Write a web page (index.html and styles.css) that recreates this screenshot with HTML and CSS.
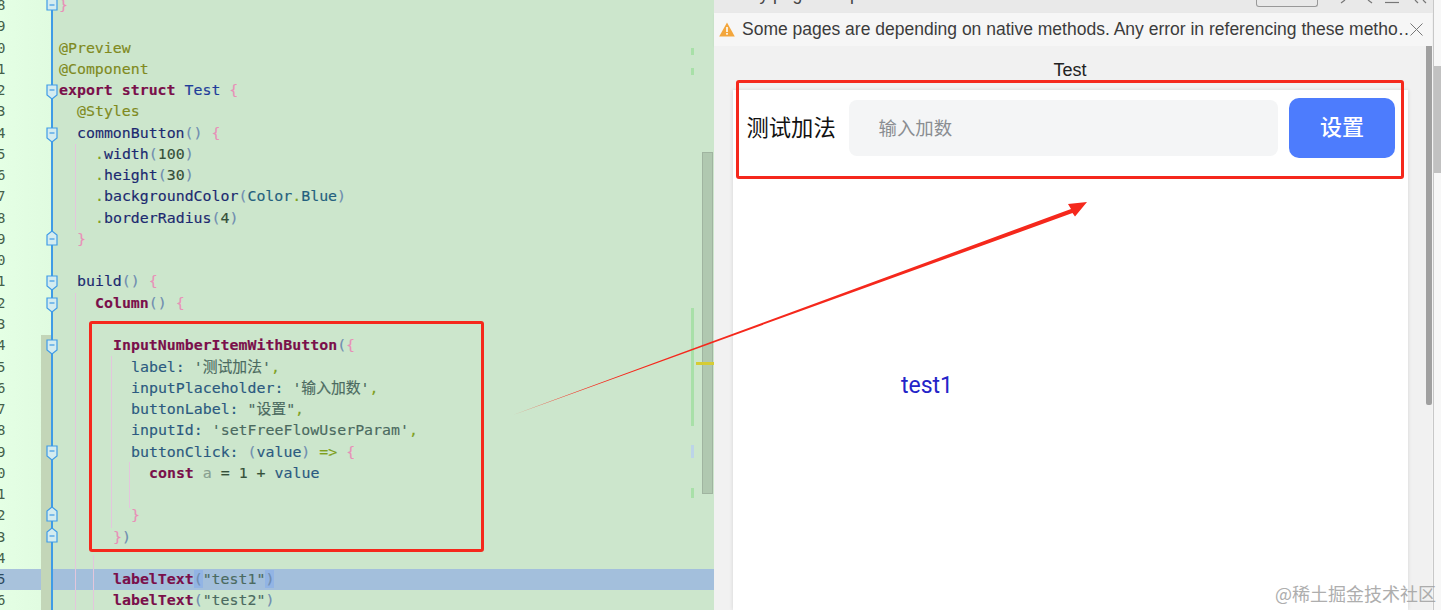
FILE: index.html
```html
<!DOCTYPE html>
<html lang="zh">
<head>
<meta charset="utf-8">
<title>Test</title>
<link rel="stylesheet" href="styles.css">
</head>
<body>
<div class="screen">
  <section class="editor">
    <div class="gutter">
      <div class="ln">8</div><div class="ln">9</div><div class="ln">0</div><div class="ln">1</div><div class="ln">2</div><div class="ln">3</div><div class="ln">4</div><div class="ln">5</div><div class="ln">6</div><div class="ln">7</div><div class="ln">8</div><div class="ln">9</div><div class="ln">0</div><div class="ln">1</div><div class="ln">2</div><div class="ln">3</div><div class="ln">4</div><div class="ln">5</div><div class="ln">6</div><div class="ln">7</div><div class="ln">8</div><div class="ln">9</div><div class="ln">0</div><div class="ln">1</div><div class="ln">2</div><div class="ln">3</div><div class="ln">4</div><div class="ln ln-sel">5</div><div class="ln">6</div>
    </div>
    <div class="code">
      <div class="l"><span class="br">}</span></div>
      <div class="l"></div>
      <div class="l"><span class="ann">@Preview</span></div>
      <div class="l"><span class="ann">@Component</span></div>
      <div class="l"><b class="kw">export struct</b> <span class="ty">Test</span> <span class="br">{</span></div>
      <div class="l i1"><span class="ann">@Styles</span></div>
      <div class="l i1"><span class="fn">commonButton</span><span class="pa">()</span> <span class="br">{</span></div>
      <div class="l i2"><span class="dot">.</span><span class="fn">width</span><span class="pa">(</span><span class="num">100</span><span class="pa">)</span></div>
      <div class="l i2"><span class="dot">.</span><span class="fn">height</span><span class="pa">(</span><span class="num">30</span><span class="pa">)</span></div>
      <div class="l i2"><span class="dot">.</span><span class="fn">backgroundColor</span><span class="pa">(</span><span class="ty2">Color</span><span class="dot">.</span><span class="ty2">Blue</span><span class="pa">)</span></div>
      <div class="l i2"><span class="dot">.</span><span class="fn">borderRadius</span><span class="pa">(</span><span class="num">4</span><span class="pa">)</span></div>
      <div class="l i1"><span class="br">}</span></div>
      <div class="l"></div>
      <div class="l i1"><span class="fn">build</span><span class="pa">()</span> <span class="br">{</span></div>
      <div class="l i2"><b class="kw">Column</b><span class="pa">()</span> <span class="br">{</span></div>
      <div class="l"></div>
      <div class="l i3"><b class="kw">InputNumberItemWithButton</b><span class="pa">(</span><span class="br">{</span></div>
      <div class="l i4"><span class="prop">label:</span> <span class="str">'<span class="cjk">测试加法</span>'</span><span class="dot">,</span></div>
      <div class="l i4"><span class="prop">inputPlaceholder:</span> <span class="str">'<span class="cjk">输入加数</span>'</span><span class="dot">,</span></div>
      <div class="l i4"><span class="prop">buttonLabel:</span> <span class="str">"<span class="cjk">设置</span>"</span><span class="dot">,</span></div>
      <div class="l i4"><span class="prop">inputId:</span> <span class="str">'setFreeFlowUserParam'</span><span class="dot">,</span></div>
      <div class="l i4"><span class="prop">buttonClick:</span> <span class="pa">(</span><span class="prop">value</span><span class="pa">)</span> <span class="dot">=&gt;</span> <span class="br">{</span></div>
      <div class="l i5"><b class="kw">const</b> <span class="unused">a</span> <span class="num">= 1 +</span> <span class="prop">value</span></div>
      <div class="l"></div>
      <div class="l i4"><span class="br">}</span></div>
      <div class="l i3"><span class="br">}</span><span class="pa">)</span></div>
      <div class="l"></div>
      <div class="l i3 sel"><b class="kw">labelText</b><span class="pa match">(</span><span class="str">"test1"</span><span class="pa match">)</span></div>
      <div class="l i3"><b class="kw">labelText</b><span class="pa">(</span><span class="str">"test2"</span><span class="pa">)</span></div>
    </div>
    <div class="guide guide-a"></div>
    <div class="guide guide-b"></div>
    <div class="guide guide-c"></div>
    <div class="guide guide-d"></div>
    <div class="guide guide-e"></div>
    <div class="change-band"></div>
    <div class="fold-line"></div>
    <svg class="folds" width="20" height="610" viewBox="0 0 20 610" aria-hidden="true">
      <g class="fold-g">
        <path d="M1 10h10v-10l-5-4l-5 4z"/><path d="M3.500 5h5"/>
        <path d="M1 85h10v10l-5 4l-5-4z"/><path d="M3.500 90h5"/>
        <path d="M1 128h10v10l-5 4l-5-4z"/><path d="M3.500 133h5"/>
        <path d="M1 276h10v10l-5 4l-5-4z"/><path d="M3.500 281h5"/>
        <path d="M1 298h10v10l-5 4l-5-4z"/><path d="M3.500 303h5"/>
        <path d="M1 340h10v10l-5 4l-5-4z"/><path d="M3.500 345h5"/>
        <path d="M1 446h10v10l-5 4l-5-4z"/><path d="M3.500 451h5"/>
        <path d="M1 245h10v-10l-5-4l-5 4z"/><path d="M3.500 239h5"/>
        <path d="M1 521h10v-10l-5-4l-5 4z"/><path d="M3.500 515h5"/>
        <path d="M1 542h10v-10l-5-4l-5 4z"/><path d="M3.500 536h5"/>
      </g>
    </svg>
    <div class="stripe stripe-a"></div>
    <div class="stripe stripe-b"></div>
    <div class="stripe stripe-c"></div>
    <div class="stripe stripe-d"></div>
    <div class="stripe stripe-e"></div>
    <div class="editor-scroll"></div>
    <div class="caret-mark"></div>
  </section>

  <section class="preview">
    <div class="topbar">
      <span class="top-title">Any page can preview</span>
      <div class="top-tools">
        <span class="top-select"></span>
        <svg width="112" height="8" viewBox="0 0 112 8" aria-hidden="true"><g class="top-icons"><path d="M23 3l4-3"/><path d="M50 0l4 3"/><path d="M67 2.500h14"/><path d="M97 0l3 3M105 0l3 3"/></g></svg>
      </div>
    </div>
    <div class="warn">
      <svg class="warn-ico" width="16" height="15" viewBox="0 0 16 15" aria-hidden="true"><path d="M8 0.500L15.800 14.500H0.200z" fill="#f3a63c"/><rect x="7.200" y="5" width="1.600" height="5" fill="#fff"/><rect x="7.200" y="11" width="1.600" height="1.700" fill="#fff"/></svg>
      <span class="warn-text">Some pages are depending on native methods. Any error in referencing these metho…</span>
      <svg class="warn-x" width="13" height="13" viewBox="0 0 13 13" aria-hidden="true"><path d="M0.500 0.500l12 12M12.500 0.500l-12 12" stroke="#777" stroke-width="1" fill="none"/></svg>
    </div>
    <div class="stage">
      <div class="device-title">Test</div>
      <div class="device">
        <div class="form-row">
          <span class="form-label">测试加法</span>
          <div class="form-input">输入加数</div>
          <div class="form-btn">设置</div>
        </div>
        <div class="test1">test1</div>
      </div>
    </div>
    <div class="stage-thumb"></div>
    <div class="sidebar"><div class="thumb"></div></div>
  </section>

  <div class="mark mark-code"></div>
  <div class="mark mark-device"></div>
  <svg class="arrow" width="1441" height="610" viewBox="0 0 1441 610" aria-hidden="true">
    <path d="M513 415L1071 209L1068 204L1087 202L1075 216.500L1072.500 213z" fill="#f5281c"/>
  </svg>
  <div class="watermark">@稀土掘金技术社区</div>
</div>
</body>
</html>
```
FILE: styles.css
```css
* { box-sizing: border-box; }
html, body { margin: 0; padding: 0; }
body { width: 1441px; height: 610px; overflow: hidden; background: #fff; font-family: "Liberation Sans", "Noto Sans CJK SC", sans-serif; }
.screen { position: relative; display: flex; width: 1441px; height: 610px; overflow: hidden; }

.editor { position: relative; display: flex; flex: 0 0 714px; height: 610px; background: #cce6cc; overflow: hidden; }
.gutter { flex: 0 0 53px; margin-top: -5px; background: linear-gradient(90deg, #e4ffe4, #e0fbe0); height: 620px; }
.ln { height: 21.27px; text-indent: -3px; font: 14px/21.27px "DejaVu Sans Mono", monospace; color: #45604a; }
.ln-sel { background: #a8c2dc; color: #2e4a60; }
.code { flex: 1; margin-top: -5px; padding-left: 6px; font: 14.9px/21.27px "DejaVu Sans Mono", "Noto Sans CJK SC", monospace; color: #1c2a70; -webkit-text-stroke: 0.15px currentColor; }
.l { height: 21.27px; white-space: pre; }
.i1 { padding-left: 18px; }
.i2 { padding-left: 36px; }
.i3 { padding-left: 54px; }
.i4 { padding-left: 72px; }
.i5 { padding-left: 90px; }
.sel { margin-left: -8px; padding-left: 62px; background: #a3bfdc; }
.cjk { font-family: "Noto Sans CJK SC", sans-serif; font-size: 14.8px; line-height: 0; }
.kw { color: #7a0f4a; font-weight: 700; }
.ann { color: #808a1e; }
.ty { color: #1f3d9a; }
.ty2 { color: #24607e; }
.fn { color: #1c2a70; }
.br { color: #e890b8; }
.pa { color: #6f8db0; }
.dot { color: #7fa01e; }
.num { color: #35503a; }
.prop { color: #2b5a80; }
.str { color: #4b6a60; }
.unused { color: #88a090; }
.match { background: #92b4e4; }

.guide { position: absolute; width: 1px; background: #e3c6dc; }
.guide-a { left: 75px; top: 144px; height: 86px; }
.guide-b { left: 75px; top: 293px; height: 317px; }
.guide-c { left: 93px; top: 555px; height: 55px; }
.guide-d { left: 111px; top: 356px; height: 172px; }
.guide-e { left: 129px; top: 462px; height: 46px; }
.change-band { position: absolute; left: 41px; top: 335px; width: 10px; height: 275px; background: #c3d6b8; }
.fold-line { position: absolute; left: 51px; top: 0; width: 1.5px; height: 610px; background: #3f9be6; }
.folds { position: absolute; left: 46px; top: 0; }
.fold-g path { fill: #d4ecf0; stroke: #3f9be6; stroke-width: 1.2; }
.stripe { position: absolute; left: 691px; width: 3px; background: #a8e0a8; }
.stripe-a { top: 48px; height: 7px; }
.stripe-b { top: 68px; height: 7px; }
.stripe-c { top: 308px; height: 118px; }
.stripe-d { top: 445px; height: 13px; background: #bcd4e8; }
.stripe-e { top: 488px; height: 10px; }
.editor-scroll { position: absolute; left: 702px; top: 152px; width: 11px; height: 342px; background: #b0c8b0; border: 1px solid #a0b4a0; }
.caret-mark { position: absolute; left: 696px; top: 362px; width: 18px; height: 3px; background: #d6cc34; }

.preview { position: relative; flex: 1; height: 610px; background: #f4f4f4; }
.topbar { display: flex; justify-content: space-between; height: 13px; background: #e9e9e9; overflow: hidden; }
.top-title { margin-top: -15px; margin-left: 24px; font-size: 17.5px; line-height: 18px; color: #444; white-space: nowrap; }
.top-tools { display: flex; align-items: flex-start; margin-right: 11px; }
.top-select { width: 62px; height: 7px; border: 1px solid #999; border-top: 0; border-radius: 0 0 3px 3px; }
.top-icons path { fill: none; stroke: #777; stroke-width: 1.2; }
.warn { display: flex; align-items: center; width: 718px; height: 33px; padding-left: 5px; background: #f6f6f6; box-shadow: 0 1px 2px rgba(0,0,0,0.06); }
.warn-ico { flex: none; margin-right: 7px; }
.warn-text { flex: none; width: 668px; font-size: 17.5px; line-height: 33px; color: #3c3c3c; white-space: nowrap; overflow: hidden; }
.warn-x { flex: none; }
.stage { width: 718px; height: 564px; padding: 0 24px 0 19px; background: #f1f1f1; }
.device-title { height: 44px; padding-top: 14px; margin-right: 1px; font-size: 18px; line-height: 20px; text-align: center; color: #222; }
.device { height: 520px; background: #fff; box-shadow: 0 0 4px rgba(0,0,0,0.12); }
.form-row { display: flex; align-items: center; height: 76px; padding: 8px 13px 8px 13.5px; }
.form-label { flex: none; width: 102.5px; margin-bottom: 5px; font: 22.3px/30px "Noto Sans CJK SC", sans-serif; color: #111; }
.form-input { flex: none; width: 429px; height: 56px; padding-left: 29.5px; border-radius: 8px; background: #f4f5f6; font: 18.4px/54px "Noto Sans CJK SC", sans-serif; color: #8a8d91; }
.form-btn { flex: none; width: 106px; height: 60px; margin-left: 11px; border-radius: 10px; background: #4d7cfd; font: 500 22px/54px "Noto Sans CJK SC", sans-serif; text-align: center; color: #fff; }
.test1 { margin-top: 205px; margin-left: 168px; font: 23px/30px Roboto, sans-serif; color: #2424c8; }
.stage-thumb { position: absolute; left: 712px; top: 46px; width: 6px; height: 359px; background: #a0a0a0; border-radius: 0 0 2px 2px; }
.sidebar { position: absolute; left: 719px; top: 0; width: 8px; height: 610px; background: #f7f7f7; border-left: 1px solid #c8c8c8; }
.thumb { position: absolute; left: 0; top: 66px; width: 7px; height: 107px; background: #c1c1c1; }

.mark { position: absolute; border: 3px solid #f5281c; border-radius: 3px; }
.mark-code { left: 89px; top: 321px; width: 395px; height: 231px; }
.mark-device { left: 736px; top: 80px; width: 668px; height: 99px; }
.arrow { position: absolute; left: 0; top: 0; }
.watermark { position: absolute; left: 1275px; top: 581px; font: 18px/24px "Noto Sans CJK SC", sans-serif; color: #a0a0a0; opacity: 0.85; white-space: nowrap; }
```
